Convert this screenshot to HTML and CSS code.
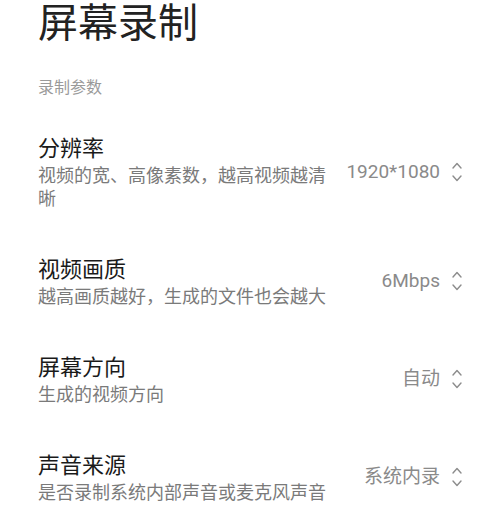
FILE: index.html
```html
<!DOCTYPE html>
<html lang="zh-CN">
<head>
<meta charset="utf-8">
<title>屏幕录制</title>
<link rel="stylesheet" href="styles.css">
</head>
<body>
<div class="page">
  <h1 class="title">屏幕录制</h1>
  <div class="section-label">录制参数</div>
  <div class="list">
    <div class="row">
      <div class="text">
        <div class="row-title">分辨率</div>
        <div class="row-sub">视频的宽、高像素数，越高视频越清晰</div>
      </div>
      <div class="value">
        <span class="value-text">1920*1080</span>
        <svg class="chev" viewBox="0 0 10 20" width="10" height="20"><path d="M1 6 L5 1.5 L9 6 M1 14 L5 18.5 L9 14" fill="none" stroke="#8c8c8c" stroke-width="1.4" stroke-linecap="round" stroke-linejoin="round"/></svg>
      </div>
    </div>
    <div class="row">
      <div class="text">
        <div class="row-title">视频画质</div>
        <div class="row-sub">越高画质越好，生成的文件也会越大</div>
      </div>
      <div class="value">
        <span class="value-text">6Mbps</span>
        <svg class="chev" viewBox="0 0 10 20" width="10" height="20"><path d="M1 6 L5 1.5 L9 6 M1 14 L5 18.5 L9 14" fill="none" stroke="#8c8c8c" stroke-width="1.4" stroke-linecap="round" stroke-linejoin="round"/></svg>
      </div>
    </div>
    <div class="row">
      <div class="text">
        <div class="row-title">屏幕方向</div>
        <div class="row-sub">生成的视频方向</div>
      </div>
      <div class="value">
        <span class="value-text">自动</span>
        <svg class="chev" viewBox="0 0 10 20" width="10" height="20"><path d="M1 6 L5 1.5 L9 6 M1 14 L5 18.5 L9 14" fill="none" stroke="#8c8c8c" stroke-width="1.4" stroke-linecap="round" stroke-linejoin="round"/></svg>
      </div>
    </div>
    <div class="row">
      <div class="text">
        <div class="row-title">声音来源</div>
        <div class="row-sub">是否录制系统内部声音或麦克风声音</div>
      </div>
      <div class="value">
        <span class="value-text">系统内录</span>
        <svg class="chev" viewBox="0 0 10 20" width="10" height="20"><path d="M1 6 L5 1.5 L9 6 M1 14 L5 18.5 L9 14" fill="none" stroke="#8c8c8c" stroke-width="1.4" stroke-linecap="round" stroke-linejoin="round"/></svg>
      </div>
    </div>
  </div>
</div>
</body>
</html>
```

FILE: styles.css
```css
html, body {
  margin: 0;
  padding: 0;
  background: #ffffff;
}
body {
  font-family: Roboto, "Noto Sans CJK SC", "Noto Sans", sans-serif;
  width: 500px;
  height: 532px;
  overflow: hidden;
}
.page {
  padding: 0 38px;
}
.title {
  margin: 0;
  font-size: 40px;
  line-height: 48px;
  font-weight: 400;
  color: #222222;
}
.section-label {
  margin-top: 28px;
  font-size: 16px;
  line-height: 24px;
  color: #9a9a9a;
}
.list {
  margin-top: 11px;
}
.row {
  display: flex;
  align-items: center;
  gap: 18px;
  padding: 22.5px 0;
}
.text {
  flex: 1;
  min-width: 0;
}
.row-title {
  font-size: 22px;
  line-height: 30px;
  color: #1a1a1a;
}
.row-sub {
  font-size: 18px;
  line-height: 23px;
  color: #7a7a7a;
}
.value {
  display: flex;
  align-items: center;
  gap: 12px;
  flex-shrink: 0;
}
.value-text {
  font-size: 19px;
  line-height: 24px;
  color: #8a8a8a;
}
.chev {
  display: block;
}
```
